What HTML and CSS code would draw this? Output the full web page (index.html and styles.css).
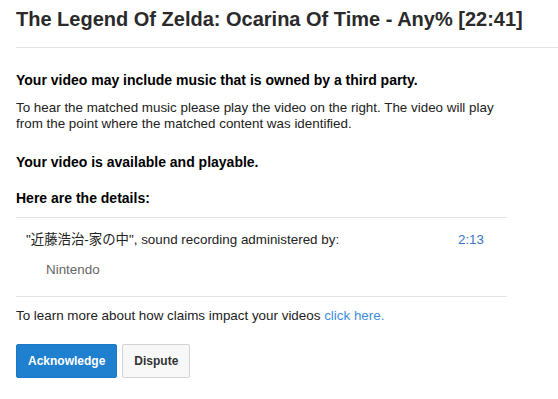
FILE: index.html
```html
<!DOCTYPE html>
<html lang="en">
<head>
<meta charset="utf-8">
<title>Claim details</title>
<link rel="stylesheet" href="styles.css">
</head>
<body>
<header class="title-bar">
  <h1 class="title">The Legend Of Zelda: Ocarina Of Time - Any% [22:41]</h1>
</header>
<main class="content">
  <h2 class="heading heading-first">Your video may include music that is owned by a third party.</h2>
  <p class="desc">To hear the matched music please play the video on the right. The video will play from the point where the matched content was identified.</p>
  <h2 class="heading heading-status">Your video is available and playable.</h2>
  <h2 class="heading heading-details">Here are the details:</h2>
  <ul class="claims">
    <li class="claim">
      <div class="claim-info">
        <div class="claim-name"><span class="cjk">"近藤浩治-家の中"</span>, sound recording administered by:</div>
        <div class="claim-owner">Nintendo</div>
      </div>
      <a class="claim-time" href="#">2:13</a>
    </li>
  </ul>
  <p class="learn">To learn more about how claims impact your videos <a class="link" href="#">click here.</a></p>
  <div class="actions">
    <button class="btn btn-primary" type="button">Acknowledge</button>
    <button class="btn btn-default" type="button">Dispute</button>
  </div>
</main>
</body>
</html>
```
FILE: styles.css
```css
html, body {
  margin: 0;
  padding: 0;
  background: #fff;
}
body {
  font-family: "Liberation Sans", Arial, sans-serif;
  color: #111;
  font-size: 13.4px;
  line-height: 16px;
}
.title-bar {
  margin-left: 16px;
  padding: 7px 0 16px;
  border-bottom: 1px solid #e3e3e3;
}
.title {
  margin: 0;
  font-size: 20px;
  line-height: 24px;
  font-weight: bold;
  color: #2a2a2a;
}
.content {
  padding: 0 51px 0 16px;
}
.heading {
  margin: 0;
  font-size: 14px;
  line-height: 18px;
  font-weight: bold;
  color: #000;
}
.heading-first { margin-top: 23px; }
.heading-status { margin-top: 21px; }
.heading-details { margin-top: 18px; }
.desc {
  margin: 11px 0 0;
  color: #222;
}
.claims {
  list-style: none;
  margin: 10px 0 0;
  padding: 0;
  border-top: 1px solid #e3e3e3;
  border-bottom: 1px solid #e3e3e3;
}
.claim {
  display: flex;
  justify-content: space-between;
  align-items: flex-start;
  padding: 14px 23px 18px 10px;
}
.cjk {
  font-family: "Liberation Sans", "Noto Sans CJK JP", sans-serif;
}
.claim-name {
  color: #222;
}
.claim-owner {
  margin: 14px 0 0 20px;
  color: #666;
}
.claim-time {
  color: #3a74c8;
  text-decoration: none;
}
.learn {
  margin: 11px 0 0;
  color: #222;
}
.link {
  color: #3c8fde;
  text-decoration: none;
}
.actions {
  display: flex;
  gap: 5px;
  margin-top: 20px;
}
.btn {
  height: 34px;
  padding: 0 11px;
  border-radius: 2px;
  font-family: "Liberation Sans", Arial, sans-serif;
  font-size: 12px;
  font-weight: bold;
  cursor: pointer;
}
.btn-primary {
  background: #1f80cf;
  border: 1px solid #1b78c4;
  color: #fff;
}
.btn-default {
  background: #f8f8f8;
  border: 1px solid #d3d3d3;
  color: #333;
}
```
